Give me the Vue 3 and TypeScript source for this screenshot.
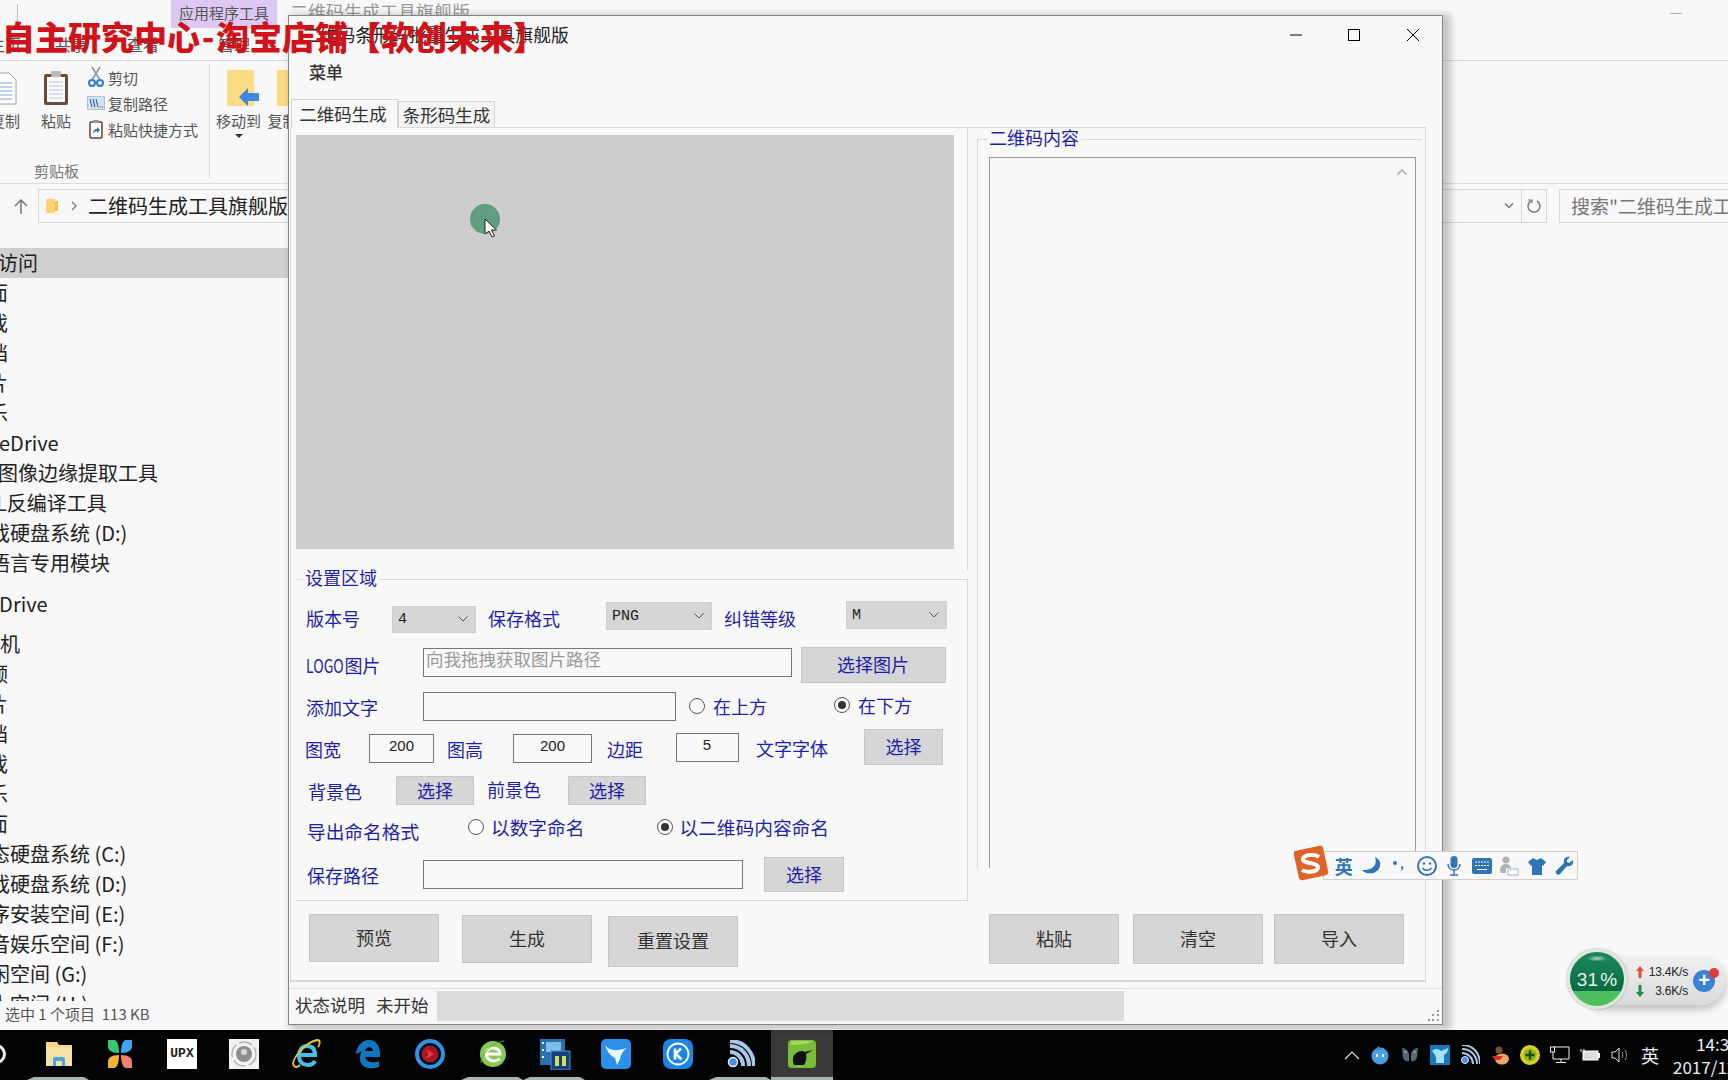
<template>
  <div class="desktop">
    <!-- explorer window behind everything -->
    <div class="explorer">
      <div class="ex-title">
        <span class="ex-sep"></span>
        <span class="ex-context">应用程序工具</span>
        <span class="ex-name">二维码生成工具旗舰版</span>
        <span class="ex-min"></span>
      </div>
      <div class="ex-tabs">
        <span class="t-home">主页</span>
        <span class="t-share">共享</span>
        <span class="t-view">查看</span>
        <span class="t-manage">管理</span>
      </div>
      <div class="ribbon">
        <div class="rib-group">
          <div class="rib-items">
            <div class="rib-big rib-copy">
              <svg width="36" height="36" viewBox="0 0 36 36"><path d="M8 3h14l7 7v24H8z" fill="#fff" stroke="#9aa5b1"/><path d="M12 13h13M12 17h13M12 21h13M12 25h13M12 29h13" stroke="#7fa8cf"/></svg>
              <span>复制</span>
            </div>
            <div class="rib-big rib-paste">
              <svg width="30" height="36" viewBox="0 0 30 36"><rect x="3" y="4" width="24" height="31" rx="2" fill="#6b4b3a"/><rect x="6" y="7" width="18" height="25" fill="#fff"/><path d="M8 12h14M8 16h14M8 20h14M8 24h14M8 28h14" stroke="#a9c3dd"/><rect x="10" y="1" width="10" height="6" rx="1" fill="#b9b9b9"/></svg>
              <span>粘贴</span>
            </div>
            <div class="rib-list">
              <div class="rib-line">
                <svg width="18" height="22" viewBox="0 0 18 22"><path d="M5 1l8 13M13 1L5 14" stroke="#8d97a3" stroke-width="1.6"/><circle cx="5" cy="17" r="3" fill="none" stroke="#2f7fc8" stroke-width="2"/><circle cx="13" cy="17" r="3" fill="none" stroke="#2f7fc8" stroke-width="2"/></svg>
                <span>剪切</span>
              </div>
              <div class="rib-line">
                <svg width="18" height="14" viewBox="0 0 18 14"><rect x=".5" y=".5" width="17" height="13" fill="#cfe3f5" stroke="#a8c4dd"/><path d="M3 3l2 8M6 3l2 8M9 3l2 8" stroke="#2a4f78"/><path d="M12.500 11h1M15 11h1" stroke="#2a4f78"/></svg>
                <span>复制路径</span>
              </div>
              <div class="rib-line">
                <svg width="18" height="20" viewBox="0 0 18 20"><rect x="3" y="3" width="12" height="16" rx="1" fill="#fff" stroke="#5d4638" stroke-width="1.500"/><rect x="6" y="1" width="6" height="3" fill="#999"/><path d="M6 15c0-4 2-5 4-5V8l3 3-3 3v-2c-2 0-3 1-4 3z" fill="#2f6fb3"/></svg>
                <span>粘贴快捷方式</span>
              </div>
            </div>
          </div>
          <span class="rib-caption">剪贴板</span>
        </div>
        <span class="rib-divider"></span>
        <div class="rib-big rib-move">
          <svg class="move-icon" width="32" height="36" viewBox="0 0 32 36"><rect x="0" y="0" width="27" height="36" fill="#fbdc84"/><path d="M12 27l9-9v5h11v8H21v5z" fill="#3f86e0"/></svg>
          <span>移动到</span>
          <i class="caret"></i>
        </div>
        <div class="rib-big rib-copyto">
          <svg width="36" height="36" viewBox="0 0 36 36"><rect x="5" y="0" width="31" height="36" fill="#fbdc84"/></svg>
          <span>复制到</span>
        </div>
      </div>
      <div class="address-row">
        <svg class="up-arrow" width="14" height="16" viewBox="0 0 14 16"><path d="M7 15V2M1 7l6-6 6 6" fill="none" stroke="#777" stroke-width="1.500"/></svg>
        <div class="address">
          <svg width="14" height="16" viewBox="0 0 14 16"><path d="M1 1h9v14H1z" fill="#fbd56f"/><path d="M10 3h3v10h-3z" fill="#f1c24f"/></svg>
          <svg class="crumb" width="8" height="12" viewBox="0 0 8 12"><path d="M2 2l4 4-4 4" fill="none" stroke="#777" stroke-width="1.200"/></svg>
          <span class="address-text">二维码生成工具旗舰版</span>
          <svg class="addr-chev" width="12" height="8" viewBox="0 0 12 8"><path d="M2 1.500l4 4 4-4" fill="none" stroke="#777" stroke-width="1.500"/></svg>
          <span class="addr-refresh">
            <svg width="16" height="16" viewBox="0 0 16 16"><path d="M5 3a6 6 0 1 0 6 0" fill="none" stroke="#777" stroke-width="1.500"/><path d="M2 2l4 0 0 3" fill="none" stroke="#777" stroke-width="1.200"/></svg>
          </span>
        </div>
        <div class="search">搜索"二维码生成工具旗舰版"</div>
      </div>
      <div class="nav">
        <div
          v-for="row in navRows"
          :key="row.id"
          class="nav-row"
          :class="{ selected: row.selected, spaced: row.spaced }"
        >
          <span :style="{ marginLeft: row.indent + 'px' }">{{ row.label }}</span>
        </div>
      </div>
      <div class="ex-status">选中 1 个项目&nbsp;&nbsp;113 KB</div>
    </div>

    <div class="taskbar">
      <div class="tb-apps">
        <span class="tb-cortana"></span>
        <span class="tb-app running">
          <svg width="30" height="28" viewBox="0 0 30 28"><path d="M2 2h11l2 3h13v21H2z" fill="#f6d77f"/><rect x="2" y="7" width="26" height="19" fill="#f5e2a6"/><path d="M9 26v-7a2 2 0 0 1 2-2h8a2 2 0 0 1 2 2v7h-3v-5h-6v5z" fill="#49a7dd"/></svg>
        </span>
        <span class="tb-app">
          <svg width="30" height="30" viewBox="0 0 30 30"><path d="M3 1h6c3 0 5 5 5 13-8 0-11-3-11-7z" fill="#35c873"/><path d="M27 1h-6c-3 0-5 5-5 13 8 0 11-3 11-7z" fill="#3da5f5"/><path d="M3 29h6c3 0 5-5 5-13-8 0-11 3-11 7z" fill="#f8b13c"/><path d="M27 29h-6c-3 0-5-5-5-13 8 0 11 3 11 7z" fill="#f07f70"/></svg>
        </span>
        <span class="tb-app">
          <span class="upx">UPX</span>
        </span>
        <span class="tb-app">
          <svg width="30" height="30" viewBox="0 0 30 30"><rect width="30" height="30" fill="#f2f2f2"/><circle cx="15" cy="15" r="12" fill="none" stroke="#b5b5b5" stroke-width="1.500" stroke-dasharray="14 3"/><circle cx="15" cy="15" r="8" fill="#8f8f8f"/><circle cx="15" cy="13" r="3" fill="#d8d8d8"/></svg>
        </span>
        <span class="tb-app">
          <svg width="30" height="30" viewBox="0 0 30 30"><path d="M9 16h15c0-6-3-9-8-9s-8 4-8 10 4 9 9 9c3 0 6-2 7-4" fill="none" stroke="#45c0ea" stroke-width="4"/><path d="M3 27C-1 22 13 4 26 1c4 0 3 4 1 7M3 27c2 2 4 1 6-1" fill="none" stroke="#e9c33c" stroke-width="1.800"/></svg>
        </span>
        <span class="tb-app">
          <svg width="26" height="30" viewBox="0 0 26 30"><path d="M1 15C2 6 8 1 14 1c7 0 11 6 11 14v3H10c1 5 8 7 14 4v6c-9 3-19 1-19-9 0-3 1-5 2-7-3 1-5 3-6 3zM10 12h8c0-5-7-5-8 0z" fill="#0f78c0"/></svg>
        </span>
        <span class="tb-app">
          <svg width="30" height="30" viewBox="0 0 30 30"><circle cx="15" cy="15" r="15" fill="#2e93e4"/><circle cx="15" cy="15" r="11" fill="#06121a"/><circle cx="15" cy="15" r="8.500" fill="#a5142a"/><path d="M11 10l8 5-8 5 2.500-5z" fill="#f23a32"/></svg>
        </span>
        <span class="tb-app running">
          <svg width="28" height="30" viewBox="0 0 28 30"><circle cx="14" cy="15" r="13" fill="#84cc52"/><path d="M7 15h14c0-4-3-6-7-6s-7 3-7 6 3 7 8 7c2 0 4-1 6-2" fill="none" stroke="#fff" stroke-width="3"/><path d="M2 24C1 18 12 3 25 2" fill="none" stroke="#5aa832"/></svg>
        </span>
        <span class="tb-app running">
          <svg width="32" height="32" viewBox="0 0 32 32"><rect x="1" y="1" width="25" height="26" fill="#2a6fb0"/><rect x="7" y="4" width="15" height="10" fill="#7fbde6"/><path d="M3 5h2M3 12h2M3 19h2" stroke="#fff" stroke-width="2"/><rect x="12" y="13" width="19" height="19" fill="#16407c" stroke="#4f90d0"/><path d="M18 18v10M25 18v10" stroke="#cfe05a" stroke-width="4"/></svg>
        </span>
        <span class="tb-app">
          <svg width="30" height="30" viewBox="0 0 30 30"><rect width="30" height="30" rx="5" fill="#2a90ea"/><path d="M4 6c4 5 9 7 22 3-4 3-6 6-7 11l-3 6-2-7C9 17 6 12 4 6z" fill="#eaf6ff"/></svg>
        </span>
        <span class="tb-app">
          <svg width="30" height="30" viewBox="0 0 30 30"><rect width="30" height="30" rx="8" fill="#1a86e8"/><circle cx="15" cy="15" r="10.500" fill="none" stroke="#fff" stroke-width="1.800"/><path d="M12 9.500v11M12 15.500l6-6M13 15l5.500 5.500" stroke="#fff" stroke-width="2.600" fill="none"/></svg>
        </span>
        <span class="tb-app running">
          <svg width="28" height="28" viewBox="0 0 28 28"><circle cx="6" cy="22" r="4.500" fill="#4f8fdc" stroke="#e6eefa" stroke-width="1.500"/><path d="M3 12c7 0 13 6 13 14M3 6c11 0 19 9 19 20M3 1c14 0 24 11 24 25" fill="none" stroke="#a9c6ea" stroke-width="4"/></svg>
        </span>
        <span class="tb-app active">
          <svg width="28" height="28" viewBox="0 0 28 28"><rect width="28" height="28" rx="4" fill="#79bc38"/><path d="M3 1h22c-5 3-15 4-22 4z" fill="#a4d860"/><path d="M6 25c-2-5-1-9 1-11 3-3 7-4 10-2l8-2-7 4c1 4 0 8-2 11z" fill="#111"/></svg>
        </span>
      </div>
      <div class="tray">
        <svg width="16" height="10" viewBox="0 0 16 10"><path d="M1 9l7-7 7 7" fill="none" stroke="#ddd" stroke-width="1.200"/></svg>
        <svg width="20" height="20" viewBox="0 0 20 20"><circle cx="10" cy="11" r="8.500" fill="#4a9fe4"/><path d="M8 1l4 4H6z" fill="#3c84c4"/><path d="M7 9v3M13 9v3" stroke="#eaf6ff" stroke-width="2"/></svg>
        <svg width="20" height="20" viewBox="0 0 20 20"><path d="M2 3c4 0 6 3 7 6v7c-3 1-6-1-6-4zM18 3c-4 0-6 3-7 6v7c3 1 6-1 6-4z" fill="#566875"/><path d="M4 7h3M13 7h3" stroke="#a4bbc8"/></svg>
        <svg width="20" height="20" viewBox="0 0 20 20"><rect width="20" height="20" fill="#1878bc"/><path d="M2 6c3-3 7-2 9 0l7-3c0 4-2 6-4 7v8H6c1-5-1-9-4-12z" fill="#a4e0f6"/></svg>
        <svg width="20" height="20" viewBox="0 0 20 20"><circle cx="5" cy="15" r="3.500" fill="#4f8fdc" stroke="#dfe9f7"/><path d="M2 8c6 0 11 5 11 11M2 4c9 0 15 7 15 15M2 0c12 0 18 9 18 19" fill="none" stroke="#a9c6ea" stroke-width="2"/></svg>
        <svg width="20" height="20" viewBox="0 0 20 20"><ellipse cx="12" cy="14" rx="7" ry="5.500" fill="#eaa864"/><circle cx="9" cy="5" r="3.500" fill="#7a5230"/><path d="M2 11h11l-3 4H5z" fill="#d9302c"/></svg>
        <svg width="20" height="20" viewBox="0 0 20 20"><circle cx="10" cy="10" r="10" fill="#d8d02a"/><circle cx="10" cy="10" r="6.500" fill="#8fb71f"/><path d="M10 5.500v9M5.500 10h9" stroke="#1d4d05" stroke-width="2.400"/></svg>
        <svg width="20" height="18" viewBox="0 0 20 18"><path d="M3 1h16v12H3zM11 13v3M6 16.500h10" fill="none" stroke="#eee"/><rect x=".5" y="1" width="4" height="5" fill="#000" stroke="#eee"/></svg>
        <svg width="20" height="14" viewBox="0 0 20 14"><rect x="3" y="3" width="15" height="9" fill="#ddd" stroke="#fff"/><rect x="18" y="5" width="2" height="5" fill="#fff"/><path d="M1 1v3M4 1v3" stroke="#fff"/></svg>
        <svg width="20" height="20" viewBox="0 0 20 20"><path d="M2 7h3l4-4v14l-4-4H2z" fill="none" stroke="#ddd"/><path d="M12 7c1 2 1 4 0 6M15 5c2 3 2 7 0 10" fill="none" stroke="#999"/></svg>
        <span class="tray-ime">英</span>
        <div class="clock"><span>14:33</span><span>2017/12/12</span></div>
      </div>
    </div>

    <!-- the QR tool window -->
    <div class="dialog">
      <div class="dlg-title">
        <span class="dlg-name">二维码条形码批量生成工具旗舰版</span>
        <svg class="ctl ctl-min" width="14" height="14" viewBox="0 0 14 14"><path d="M1 7h12" stroke="#000"/></svg>
        <svg class="ctl ctl-max" width="14" height="14" viewBox="0 0 14 14"><rect x="1.500" y="1.500" width="11" height="11" fill="none" stroke="#000"/></svg>
        <svg class="ctl ctl-close" width="14" height="14" viewBox="0 0 14 14"><path d="M1 1l12 12M13 1L1 13" stroke="#000"/></svg>
      </div>
      <div class="dlg-menu"><span>菜单</span></div>
      <div class="tabs">
        <button class="tab active">二维码生成</button>
        <button class="tab">条形码生成</button>
      </div>
      <div class="panel">
        <div class="left">
          <div class="preview-wrap"><div class="preview"></div></div>
          <fieldset class="settings">
            <legend><span>设置区域</span></legend>
            <div class="row r-version">
              <span class="lbl dn1">版本号</span>
              <div class="select sel-ver dn2"><span>4</span><svg width="12" height="8" viewBox="0 0 12 8"><path d="M1.500 1.500L6 6l4.500-4.500" fill="none" stroke="#555"/></svg></div>
              <span class="lbl dn1">保存格式</span>
              <div class="select sel-fmt up1"><span>PNG</span><svg width="12" height="8" viewBox="0 0 12 8"><path d="M1.500 1.500L6 6l4.500-4.500" fill="none" stroke="#555"/></svg></div>
              <span class="lbl dn1">纠错等级</span>
              <div class="select sel-lvl up2"><span>M</span><svg width="12" height="8" viewBox="0 0 12 8"><path d="M1.500 1.500L6 6l4.500-4.500" fill="none" stroke="#555"/></svg></div>
            </div>
            <div class="row r-logo">
              <span class="lbl dn1"><span class="latin">LOGO</span>图片</span>
              <input class="field f-logo up2" placeholder="向我拖拽获取图片路径" />
              <button class="pick pick-image dn1">选择图片</button>
            </div>
            <div class="row r-text">
              <span class="lbl dn1">添加文字</span>
              <input class="field f-text" />
              <label class="radio-item"><i class="radio"></i>在上方</label>
              <label class="radio-item up1"><i class="radio on"></i>在下方</label>
            </div>
            <div class="row r-size">
              <span class="lbl dn2">图宽</span>
              <input class="field num f-w dn1" value="200" />
              <span class="lbl dn2">图高</span>
              <input class="field num f-h dn1" value="200" />
              <span class="lbl dn2">边距</span>
              <input class="field num f-m" value="5" />
              <span class="lbl dn1">文字字体</span>
              <button class="pick pick-font">选择</button>
            </div>
            <div class="row r-color">
              <span class="lbl dn1">背景色</span>
              <button class="pick pick-small">选择</button>
              <span class="lbl up1">前景色</span>
              <button class="pick pick-small">选择</button>
            </div>
            <div class="row r-export">
              <span class="lbl wide dn2">导出命名格式</span>
              <label class="radio-item wide gap7 up2"><i class="radio"></i>以数字命名</label>
              <label class="radio-item wide gap7 up2"><i class="radio on"></i>以二维码内容命名</label>
            </div>
            <div class="row r-path">
              <span class="lbl">保存路径</span>
              <input class="field f-path" />
              <button class="pick pick-path">选择</button>
            </div>
          </fieldset>
          <div class="actions actions-left">
            <button class="act a-preview">预览</button>
            <button class="act a-make">生成</button>
            <button class="act a-reset">重置设置</button>
          </div>
        </div>
        <div class="right">
          <fieldset class="content-box">
            <legend><span>二维码内容</span></legend>
            <div class="content-text">
              <svg class="scroll-up" width="12" height="8" viewBox="0 0 12 8"><path d="M1.500 6.500L6 2l4.500 4.500" fill="none" stroke="#bbb" stroke-width="2"/></svg>
            </div>
          </fieldset>
          <div class="actions actions-right">
            <button class="act">粘贴</button>
            <button class="act">清空</button>
            <button class="act">导入</button>
          </div>
        </div>
      </div>
      <div class="status">
        <span class="st-label">状态说明</span>
        <span class="st-value">未开始</span>
        <div class="progress"></div>
        <svg class="grip" width="14" height="14" viewBox="0 0 14 14" fill="#9a9a9a"><rect x="10" y="1" width="2" height="2"/><rect x="10" y="5" width="2" height="2"/><rect x="5" y="5" width="2" height="2"/><rect x="10" y="10" width="2" height="2"/><rect x="5" y="10" width="2" height="2"/><rect x="1" y="10" width="2" height="2"/></svg>
      </div>
    </div>

    <!-- things floating over the windows -->
    <div class="watermark">自主研究中心<span class="dash">-</span>淘宝店铺【软创未来】</div>
    <div class="click-dot"></div>
    <svg class="cursor" width="14" height="20" viewBox="0 0 14 20"><path d="M1 1v15l4-3 3 6 2.500-1-3-6h5z" fill="#fff" stroke="#222"/></svg>

    <div class="sogou">
      <svg class="sogou-logo" width="36" height="36" viewBox="0 0 36 36"><rect x="3" y="3" width="30" height="30" rx="3" fill="#e0642a" transform="rotate(-12 18 18)"/><path d="M26 12c-3-3-15-3-16 2s14 3 15 8-12 6-16 3" fill="none" stroke="#fff" stroke-width="4"/></svg>
      <span class="sg-item sg-ime">英</span>
      <span class="sg-item"><svg width="22" height="20" viewBox="0 0 22 20"><path d="M15 1c3 8-3 14-13 13 4 5 16 5 18-4 1-4-1-7-5-9z" fill="#2f74b5"/></svg></span>
      <span class="sg-item"><svg width="14" height="16" viewBox="0 0 14 16"><circle cx="3" cy="5" r="2" fill="#2f74b5"/><path d="M10 8c2 0 2 3-1 5 1-2 0-3 0-4z" fill="#2f74b5"/></svg></span>
      <span class="sg-item"><svg width="22" height="22" viewBox="0 0 22 22"><circle cx="11" cy="11" r="9" fill="none" stroke="#2f74b5" stroke-width="2"/><circle cx="8" cy="8.500" r="1.300" fill="#2f74b5"/><circle cx="14" cy="8.500" r="1.300" fill="#2f74b5"/><path d="M6.500 13c2 3 7 3 9 0" fill="none" stroke="#2f74b5" stroke-width="1.500"/></svg></span>
      <span class="sg-item"><svg width="16" height="22" viewBox="0 0 16 22"><rect x="4.500" y="1" width="7" height="12" rx="3.500" fill="#2f74b5"/><path d="M2 9c0 8 12 8 12 0M8 15v4M4 20h8" fill="none" stroke="#2f74b5" stroke-width="1.500"/></svg></span>
      <span class="sg-item"><svg width="20" height="16" viewBox="0 0 20 16"><rect width="20" height="16" rx="2" fill="#2f74b5"/><path d="M3 4h14M3 7.500h14" stroke="#fff" stroke-dasharray="2 1"/><path d="M5 11.500h10" stroke="#fff"/></svg></span>
      <span class="sg-item"><svg width="22" height="20" viewBox="0 0 22 20"><circle cx="8" cy="4" r="3.500" fill="#aeb4b8"/><path d="M2 15c0-5 3-7 6-7s5 2 5 4H8v5H3z" fill="#aeb4b8"/><rect x="10" y="13" width="10" height="6" fill="#fff" stroke="#aeb4b8"/></svg></span>
      <span class="sg-item"><svg width="20" height="18" viewBox="0 0 20 18"><path d="M6 1l4 2 4-2 5 4-3 4-1-1v10H5V8L4 9 1 5z" fill="#2f74b5"/></svg></span>
      <span class="sg-item"><svg width="20" height="20" viewBox="0 0 20 20"><path d="M18 4l-4 3-2-1 0-2 3-3c-4-1-7 2-6 6L1 15c-1 2 2 5 4 3l7-8c4 1 7-2 6-6z" fill="#2f74b5"/></svg></span>
    </div>

    <div class="net">
      <div class="net-pill">
        <div class="net-rates">
          <span>
            <svg class="rate-arrow" width="8" height="12" viewBox="0 0 8 12"><path d="M4 0l4 5H5.500v7h-3V5H0z" fill="#d8503c"/></svg>
            13.4K/s
          </span>
          <span>
            <svg class="rate-arrow" width="8" height="12" viewBox="0 0 8 12"><path d="M4 12L0 7h2.500V0h3v7H8z" fill="#1e8a50"/></svg>
            3.6K/s
          </span>
        </div>
        <span class="net-plus">+</span>
        <i class="net-badge"></i>
      </div>
      <div class="net-ball"><span>31 %</span></div>
    </div>
  </div>
</template>

<script setup lang="ts">
interface NavRow {
  id: number;
  label: string;
  indent: number;
  selected?: boolean;
  spaced?: boolean;
}

const labels: [string, number, boolean?][] = [
  ["快速访问", -42],
  ["桌面", -32],
  ["游戏", -32],
  ["文档", -32],
  ["图片", -32],
  ["音乐", -32],
  ["OneDrive", -28],
  ["图像边缘提取工具", -2],
  ["L反编译工具", -4],
  ["游戏硬盘系统 (D:)", -30],
  ["易语言专用模块", -30],
  ["OneDrive", -39, true],
  ["本机", -20, true],
  ["视频", -32],
  ["图片", -32],
  ["文档", -32],
  ["游戏", -32],
  ["音乐", -32],
  ["桌面", -32],
  ["固态硬盘系统 (C:)", -30],
  ["游戏硬盘系统 (D:)", -30],
  ["程序安装空间 (E:)", -30],
  ["影音娱乐空间 (F:)", -30],
  ["休闲空间 (G:)", -30],
  ["个人空间 (H:)", -30],
];

const navRows: NavRow[] = labels.map(([label, indent, spaced], id) => ({
  id,
  label,
  indent,
  spaced,
  selected: id === 0,
}));
</script>

<style>
html,
body {
  margin: 0;
  overflow: hidden;
  background: #f8f8f8;
}
</style>

<style scoped>
.desktop {
  position: relative;
  width: 1728px;
  height: 1080px;
  overflow: hidden;
  display: flex;
  flex-direction: column;
  background: #f8f8f8;
  color: #333;
  font-family: "Noto Sans CJK SC", "Noto Sans", sans-serif;
  line-height: 1;
}

/* explorer */
.explorer {
  height: 1030px;
  display: flex;
  flex-direction: column;
  overflow: hidden;
}
.ex-title {
  height: 28px;
  display: flex;
  flex: none;
}
.ex-sep {
  width: 1px;
  height: 18px;
  background: #bbb;
  margin: 4px 153px 0 17px;
}
.ex-context {
  width: 106px;
  text-align: center;
  background: #dcc8f2;
  color: #555;
  font-size: 15px;
  line-height: 26px;
}
.ex-name {
  margin: 2px 0 0 13px;
  font-size: 18px;
  color: #999;
}
.ex-min {
  width: 12px;
  height: 1px;
  background: #aaa;
  margin: 13px 0 0 1200px;
}
.ex-tabs {
  height: 32px;
  flex: none;
  border-bottom: 1px solid #d8d8d8;
  display: flex;
  align-items: center;
  font-size: 16px;
  color: #555;
}
.t-home {
  margin-left: -11px;
}
.t-share {
  margin-left: 34px;
}
.t-view {
  margin-left: 40px;
}
.t-manage {
  margin-left: 59px;
}
.ribbon {
  height: 123px;
  flex: none;
  display: flex;
  border-bottom: 1px solid #dcdcdc;
  box-sizing: border-box;
  padding-top: 9px;
  font-size: 15px;
  color: #555;
}
.rib-group {
  display: flex;
  flex-direction: column;
  margin-left: -13px;
}
.rib-items {
  display: flex;
  height: 93px;
}
.rib-big {
  display: flex;
  flex-direction: column;
  align-items: center;
  gap: 7px;
}
.rib-copy {
  width: 36px;
}
.rib-paste {
  width: 30px;
  margin-left: 18px;
}
.rib-list {
  margin: -6px 0 0 16px;
}
.rib-line {
  display: flex;
  align-items: center;
  height: 26px;
}
.rib-line svg {
  width: 18px;
  margin-right: 3px;
}
.rib-caption {
  margin: 0 0 0 47px;
  color: #777;
}
.rib-divider {
  width: 1px;
  height: 114px;
  background: #dcdcdc;
  margin: -6px 0 0 11px;
}
.rib-move {
  width: 45px;
  margin-left: 6px;
  position: relative;
}
.move-icon {
  margin-left: 8px;
}
.caret {
  width: 0;
  height: 0;
  border: 4px solid transparent;
  border-top: 4px solid #333;
  margin-top: -1px;
}
.rib-copyto {
  width: 46px;
  margin-left: 6px;
}
.address-row {
  height: 46px;
  flex: none;
  box-sizing: border-box;
  display: flex;
  align-items: flex-start;
}
.up-arrow {
  margin: 15px 10px 0 14px;
  flex: none;
}
.address {
  width: 1509px;
  height: 34px;
  margin-top: 5px;
  box-sizing: border-box;
  border: 1px solid #d8d8d8;
  display: flex;
  flex: none;
  align-items: center;
  padding-left: 6px;
}
.crumb {
  margin: 0 10px 0 11px;
}
.address-text {
  font-size: 20px;
  color: #222;
}
.addr-chev {
  margin-left: auto;
}
.addr-refresh {
  width: 24px;
  height: 32px;
  margin-left: 6px;
  border-left: 1px solid #d8d8d8;
  display: flex;
  align-items: center;
  justify-content: center;
}
.search {
  width: 190px;
  height: 34px;
  margin: 5px 0 0 12px;
  box-sizing: border-box;
  border: 1px solid #d8d8d8;
  padding-left: 11px;
  font-size: 19px;
  line-height: 31px;
  color: #777;
  white-space: nowrap;
  overflow: hidden;
  flex: none;
}
.nav {
  width: 288px;
  height: 753px;
  margin-top: 18px;
  flex: none;
  overflow: hidden;
  font-size: 20px;
  color: #222;
}
.nav-row {
  height: 30px;
  line-height: 30px;
  white-space: nowrap;
}
.nav-row.selected {
  background: #cfcfcf;
}
.nav-row.spaced {
  margin-top: 10.5px;
}
.ex-status {
  height: 28px;
  line-height: 26px;
  padding-left: 5px;
  font-size: 15px;
  color: #555;
}

/* taskbar */
.taskbar {
  height: 50px;
  flex: none;
  background: #020404;
  display: flex;
  justify-content: space-between;
  color: #eee;
}
.tb-apps {
  display: flex;
  position: relative;
  padding-left: 27px;
}
.tb-cortana {
  position: absolute;
  left: -14px;
  top: 14px;
  width: 14px;
  height: 14px;
  border: 3px solid #eee;
  border-radius: 50%;
}
.tb-app {
  width: 62px;
  height: 50px;
  display: flex;
  align-items: center;
  justify-content: center;
  box-sizing: border-box;
  padding-bottom: 3px;
}
.tb-app.running {
  border-bottom: 3px solid #a9b5b3;
  border-left: 7px solid transparent;
  border-right: 5px solid transparent;
  padding-bottom: 0;
  background-clip: padding-box;
}
.tb-app.active {
  background: #3a3a3a;
  border-bottom: 3px solid #a9b5b3;
  padding-bottom: 0;
}
.upx {
  width: 30px;
  height: 30px;
  background: #fff;
  color: #222;
  font-family: "Liberation Mono", monospace;
  font-weight: 700;
  font-size: 13px;
  line-height: 30px;
  text-align: center;
}
.tray {
  display: flex;
  align-items: center;
  gap: 10px;
  width: 384px;
  box-sizing: border-box;
  overflow: hidden;
  flex: none;
}
.tray svg {
  flex: none;
}
.tray-ime {
  font-size: 18px;
  margin-left: 1px;
}
.clock {
  display: flex;
  flex-direction: column;
  align-items: center;
  gap: 6px;
  font-size: 17px;
  margin-left: 4px;
  white-space: nowrap;
  flex: none;
}

/* dialog */
.dialog {
  position: absolute;
  left: 288px;
  top: 15px;
  width: 1155px;
  height: 1010px;
  box-sizing: border-box;
  border: 1px solid #858585;
  background: #f8f8f8;
  box-shadow: 5px 2px 7px 3px rgba(0, 0, 0, 0.2);
  display: flex;
  flex-direction: column;
}
.dlg-title {
  height: 36px;
  flex: none;
  display: flex;
  align-items: center;
  padding: 2px 0 0 13px;
  box-sizing: border-box;
}
.dlg-name {
  font-size: 17.800px;
  color: #222;
  width: 987px;
}
.ctl-max {
  margin-left: 44px;
}
.ctl-close {
  margin-left: 45px;
}
.dlg-menu {
  height: 42px;
  flex: none;
  box-sizing: border-box;
  display: flex;
  align-items: center;
  padding: 0 0 4px 20px;
  font-size: 17px;
  font-weight: 500;
  color: #333;
}
.tabs {
  height: 28px;
  margin: 5px 0 0 2px;
  flex: none;
  display: flex;
  align-items: flex-end;
  position: relative;
  z-index: 1;
}
.tab {
  height: 26px;
  width: 97px;
  padding: 0;
  box-sizing: border-box;
  border: 1px solid #d4d4d4;
  border-bottom: 0;
  background: #f4f4f4;
  font: inherit;
  font-size: 17.500px;
  color: #333;
}
.tab.active {
  height: 29px;
  width: 107px;
  padding-right: 3px;
  background: #f8f8f8;
  margin-bottom: -1px;
}
.panel {
  height: 855px;
  flex: none;
  margin-left: 1px;
  width: 1136px;
  box-sizing: border-box;
  border: 1px solid #d8d8d8;
  border-bottom-width: 2px;
  display: flex;
}
.left {
  width: 677px;
  flex: none;
  padding-left: 5px;
  box-sizing: content-box;
}
.preview-wrap {
  height: 442px;
  width: 672px;
  box-sizing: border-box;
  padding-top: 7px;
  border-right: 1px solid #d8d8d8;
}
.preview {
  width: 658px;
  height: 414px;
  background: #cdcdcd;
}
.settings {
  width: 672px;
  margin: 0;
  padding: 12px 0 7px;
  box-sizing: border-box;
  border: 1px solid #d8d8d8;
  border-left: 0;
  min-width: 0;
}
legend {
  padding: 0 2px;
  font-size: 18px;
  line-height: 18px;
  color: #1f1fa8;
}
legend span {
  display: block;
  transform: translateY(-2px);
}
.settings legend {
  margin-left: 7px;
}
.row {
  display: grid;
  align-items: center;
  justify-items: start;
  color: #1f1fa8;
}
.lbl {
  font-size: 18px;
  white-space: nowrap;
}
/* the original's latin letters are narrow, squeeze them to the same width */
.latin {
  display: inline-block;
  transform: scaleX(0.78);
  transform-origin: left center;
  margin-right: -10px;
}
.wide {
  font-size: 18.700px;
}
.dn1 {
  margin-top: 2px;
}
.dn2 {
  margin-top: 4px;
}
.up1 {
  margin-bottom: 2px;
}
.up2 {
  margin-bottom: 4px;
}
.r-version {
  height: 34px;
  padding-left: 10px;
  grid-template-columns: 86px 96px 118px 118px 122px 101px;
}
.r-logo {
  height: 40px;
  margin-top: 10px;
  padding-left: 10px;
  grid-template-columns: 117px 377.5px 145px;
}
.r-text {
  height: 32px;
  margin-top: 6px;
  padding-left: 10px;
  grid-template-columns: 117px 266px 145px 100px;
}
.r-size {
  height: 38px;
  margin-top: 6px;
  padding-left: 9px;
  grid-template-columns: 64px 78px 66px 94px 68.5px 80.5px 108px 79px;
}
.r-color {
  height: 32px;
  margin-top: 8px;
  padding-left: 12px;
  grid-template-columns: 88px 91px 81px 78px;
}
.r-export {
  height: 26px;
  margin-top: 10px;
  padding-left: 11px;
  grid-template-columns: 161px 188.5px 170px;
}
.r-path {
  height: 37px;
  margin-top: 14px;
  padding-left: 11px;
  grid-template-columns: 116px 341px 80px;
}
.select {
  height: 28px;
  box-sizing: border-box;
  background: #d6d6d6;
  border: 1px solid #cfcfcf;
  display: flex;
  align-items: center;
  justify-content: space-between;
  padding: 0 6px 0 5px;
  color: #222;
  font-family: "Liberation Mono", monospace;
  font-size: 15px;
}
.sel-ver {
  width: 84px;
  height: 27px;
}
.sel-fmt {
  width: 106px;
}
.sel-lvl {
  width: 101px;
}
.field {
  height: 29px;
  box-sizing: border-box;
  border: 1px solid #777;
  border-radius: 0;
  background: #f9f9f9;
  padding: 0 2px;
  outline: none;
  font-family: "Noto Sans CJK SC", sans-serif;
  font-size: 17.500px;
}
.field::placeholder {
  color: #999;
}
.field.num {
  font-family: "Liberation Sans", sans-serif;
  font-size: 15px;
  text-align: center;
  color: #222;
  padding-bottom: 5px;
}
.f-logo {
  width: 369px;
  padding-bottom: 8px;
}
.f-text {
  width: 253px;
}
.f-w {
  width: 65px;
}
.f-h {
  width: 79px;
}
.f-m {
  width: 63px;
}
.f-path {
  width: 320px;
}
.pick {
  height: 36px;
  padding: 0 0 2px;
  box-sizing: border-box;
  background: #d6d6d6;
  border: 1px solid #c8c8c8;
  color: #1f1fa8;
  font-family: inherit;
  font-size: 18px;
}
.pick-image {
  width: 145px;
}
.pick-font {
  width: 79px;
}
.pick-small {
  width: 78px;
  height: 29px;
}
.pick-path {
  width: 80px;
  height: 35px;
}
.radio-item {
  display: flex;
  align-items: center;
  gap: 8px;
  font-size: 18px;
  white-space: nowrap;
}
.radio-item.wide {
  font-size: 18.700px;
}
.radio-item.gap7 {
  gap: 7px;
}
.radio {
  width: 16px;
  height: 16px;
  box-sizing: border-box;
  border: 1px solid #555;
  border-radius: 50%;
  background: #fbfbfb;
  display: flex;
  align-items: center;
  justify-content: center;
}
.radio.on::after {
  content: "";
  width: 8px;
  height: 8px;
  border-radius: 50%;
  background: #333;
}
.actions {
  display: flex;
  align-items: flex-start;
}
.act {
  width: 130px;
  height: 50px;
  padding: 0 0 3px;
  box-sizing: border-box;
  background: #d6d6d6;
  border: 1px solid #c6c6c6;
  color: #333;
  font-family: inherit;
  font-size: 18px;
}
.actions-left {
  padding: 13px 0 0 13px;
}
.a-preview {
  height: 48px;
}
.a-make {
  height: 48px;
  margin: 1px 0 0 23px;
}
.a-reset {
  height: 51px;
  margin: 2px 0 0 16px;
}
.right {
  margin-left: 4px;
  padding-top: 2px;
  width: 447px;
  flex: none;
}
.content-box {
  width: 445px;
  height: 738px;
  margin: 0;
  padding: 9px 0 0 11px;
  box-sizing: border-box;
  border: 0;
  border-top: 1px solid #d8d8d8;
  border-left: 1px solid #d8d8d8;
  min-width: 0;
}
.content-box legend {
  margin-left: -2px;
}
.content-text {
  position: relative;
  width: 427px;
  height: 711px;
  box-sizing: border-box;
  border: 1px solid #9a9a9a;
  border-bottom: 0;
}
.scroll-up {
  position: absolute;
  right: 7px;
  top: 10px;
}
.actions-right {
  padding: 46px 0 0 12px;
  gap: 14px;
}
.actions-right .act:last-child {
  margin-left: -3px;
}
.status {
  position: relative;
  height: 36px;
  margin-top: 6px;
  flex: none;
  box-sizing: border-box;
  border-top: 1px solid #dedede;
  display: flex;
  align-items: center;
  font-size: 17.500px;
  padding: 0 0 2px 6px;
  color: #333;
}
.st-label {
  width: 81px;
  margin-top: -2px;
}
.st-value {
  width: 61px;
  margin-top: -2px;
}
.progress {
  width: 687px;
  height: 30px;
  background: #dcdcdc;
}
.grip {
  position: absolute;
  right: 1px;
  bottom: 1px;
}

/* overlays */
.watermark {
  position: absolute;
  left: 2px;
  top: 19px;
  font-size: 33px;
  line-height: 34px;
  font-weight: 900;
  color: #d0131a;
  white-space: nowrap;
}
.dash {
  display: inline-block;
  width: 16px;
  text-align: center;
}
.click-dot {
  position: absolute;
  left: 470px;
  top: 204px;
  width: 30px;
  height: 30px;
  border-radius: 50%;
  background: #5f9c80;
}
.cursor {
  position: absolute;
  left: 484px;
  top: 218px;
}
.sogou {
  position: absolute;
  left: 1323px;
  top: 851px;
  width: 255px;
  height: 29px;
  box-sizing: border-box;
  background: #f8f8f8;
  border: 1px solid #cfcfcf;
  display: flex;
  align-items: center;
  padding-left: 6px;
}
.sogou-logo {
  position: absolute;
  left: -31px;
  top: -7px;
}
.sg-item {
  width: 27.600px;
  flex: none;
  display: flex;
  justify-content: center;
  align-items: center;
  color: #2f74b5;
}
.sg-ime {
  font-size: 18px;
  font-weight: 700;
}
.net {
  position: absolute;
  left: 1566px;
  top: 949px;
  width: 160px;
  height: 60px;
}
.net-pill {
  position: absolute;
  left: 28px;
  top: 8px;
  width: 131px;
  height: 48px;
  box-sizing: border-box;
  border-radius: 0 24px 24px 0;
  background: linear-gradient(#f0f0f0, #dadada);
  box-shadow: 0 4px 8px rgba(0, 0, 0, 0.25);
  display: flex;
  align-items: center;
}
.net-rates {
  display: flex;
  flex-direction: column;
  width: 64px;
  margin-left: 30px;
  gap: 7px;
  font-family: "Liberation Sans", sans-serif;
  font-size: 12px;
  letter-spacing: -0.2px;
  color: #222;
}
.net-rates span {
  display: flex;
  justify-content: flex-end;
  position: relative;
}
.rate-arrow {
  position: absolute;
  left: 12px;
  top: 0;
}
.net-plus {
  width: 22px;
  height: 22px;
  margin-left: 5px;
  border-radius: 50%;
  background: #3b82d6;
  color: #fff;
  font-size: 20px;
  font-weight: 700;
  line-height: 21px;
  text-align: center;
  font-family: "Liberation Sans", sans-serif;
}
.net-badge {
  position: absolute;
  right: 6px;
  top: 11px;
  width: 10px;
  height: 10px;
  border-radius: 50%;
  background: #e03a3a;
}
.net-ball {
  position: absolute;
  left: 1px;
  top: 0;
  width: 60px;
  height: 60px;
  box-sizing: border-box;
  border: 3px solid #dfe8df;
  border-radius: 50%;
  background:
    radial-gradient(ellipse 10px 3px at 50% 12%, rgba(255, 255, 255, 0.7), transparent),
    linear-gradient(#1a8a5a 0, #0b6a44 72%, #4cc05c 72%);
  box-shadow: 0 0 2px #888;
  display: flex;
  align-items: center;
  justify-content: center;
  color: #e3f5ea;
  font-family: "Liberation Sans", sans-serif;
  font-size: 19px;
  word-spacing: -3px;
}
</style>
